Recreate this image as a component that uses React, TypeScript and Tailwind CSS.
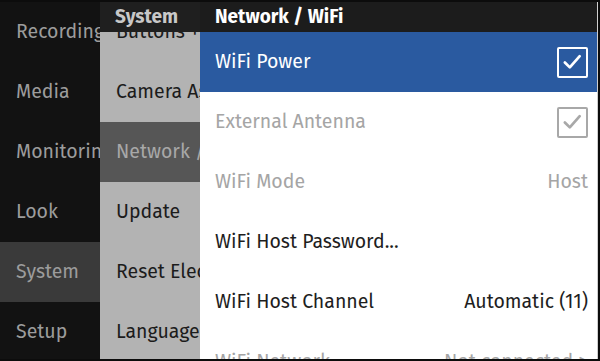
import React from 'react';

const FONT = { fontFamily: '"Fira Sans", "Open Sans", "Noto Sans", sans-serif' };

const SECTIONS = ['Recording', 'Media', 'Monitoring', 'Look', 'System', 'Setup'];
const SYSTEM_ITEMS = ['Buttons +', 'Camera Assist', 'Network / WiFi', 'Update', 'Reset Electronics', 'Language'];

type Row = {
  label: string;
  value?: string;
  check?: boolean;
  disabled?: boolean;
  selected?: boolean;
};

const WIFI_ROWS: Row[] = [
  { label: 'WiFi Power', check: true, selected: true },
  { label: 'External Antenna', check: true, disabled: true },
  { label: 'WiFi Mode', value: 'Host', disabled: true },
  { label: 'WiFi Host Password...' },
  { label: 'WiFi Host Channel', value: 'Automatic (11)' },
  { label: 'WiFi Network', value: 'Not connected >', disabled: true },
];

function CheckBox({ selected, disabled }: { selected?: boolean; disabled?: boolean }) {
  const color = selected ? 'border-white text-white' : disabled ? 'border-[#a8a8a8] text-[#a8a8a8]' : 'border-[#222] text-[#222]';
  return (
    <div className={`flex size-[31px] items-center justify-center rounded-[2px] border-[2.5px] ${color}`}>
      <svg viewBox="0 0 30 30" className="size-[28px]" fill="none" stroke="currentColor" strokeWidth="3" strokeLinecap="round" strokeLinejoin="round">
        <path d="M6.5 15.5 L12 21 L23 8.5" />
      </svg>
    </div>
  );
}

export default function App() {
  return (
    <div className="flex h-[361px] w-[600px] flex-col overflow-hidden bg-[#0c0c0c] text-[19.5px]" style={FONT}>
      <div className="flex h-[359px] pt-[2px]">
        {/* top level sections */}
        <nav className="flex w-[100px] shrink-0 flex-col bg-[#121212]">
          {SECTIONS.map((s) => (
            <div
              key={s}
              className={`flex h-[60px] shrink-0 items-center overflow-hidden whitespace-nowrap pl-4 text-[#9c9c9c] ${s === 'System' ? 'bg-[#3a3a3a]' : ''}`}
            >
              {s}
            </div>
          ))}
        </nav>

        {/* system submenu */}
        <div className="relative w-[100px] shrink-0 overflow-hidden bg-[#b3b3b3]">
          <div className="flex flex-col">
            {SYSTEM_ITEMS.map((s) => (
              <div
                key={s}
                className={`flex h-[60px] shrink-0 items-center whitespace-nowrap pl-4 ${s === 'Network / WiFi' ? 'bg-[#565656] text-[#a8a8a8]' : 'text-[#1c1c1c]'}`}
              >
                {s}
              </div>
            ))}
          </div>
          <div className="absolute inset-x-0 top-0 flex h-[30px] items-center bg-[#1f1f1f] pl-[15px] text-[19px] font-bold text-[#c8c8c8]">
            System
          </div>
        </div>

        {/* network / wifi panel */}
        <div className="flex w-[398px] shrink-0 flex-col overflow-hidden border-r border-[#cfcfcf] bg-white">
          <div className="flex h-[30px] shrink-0 items-center bg-[#1c1c1c] pl-[15px] text-[19px] font-bold text-white">
            Network / WiFi
          </div>
          {WIFI_ROWS.map((r) => (
            <div
              key={r.label}
              className={`flex h-[60px] shrink-0 items-center justify-between pl-[15px] pr-[9px] ${
                r.selected ? 'bg-[#2a5aa0] text-white' : r.disabled ? 'text-[#a5a5a5]' : 'text-[#1e1e1e]'
              }`}
            >
              <span className="whitespace-nowrap">{r.label}</span>
              {r.check ? <CheckBox selected={r.selected} disabled={r.disabled} /> : null}
              {r.value ? <span className="whitespace-nowrap">{r.value}</span> : null}
            </div>
          ))}
        </div>
      </div>
    </div>
  );
}
